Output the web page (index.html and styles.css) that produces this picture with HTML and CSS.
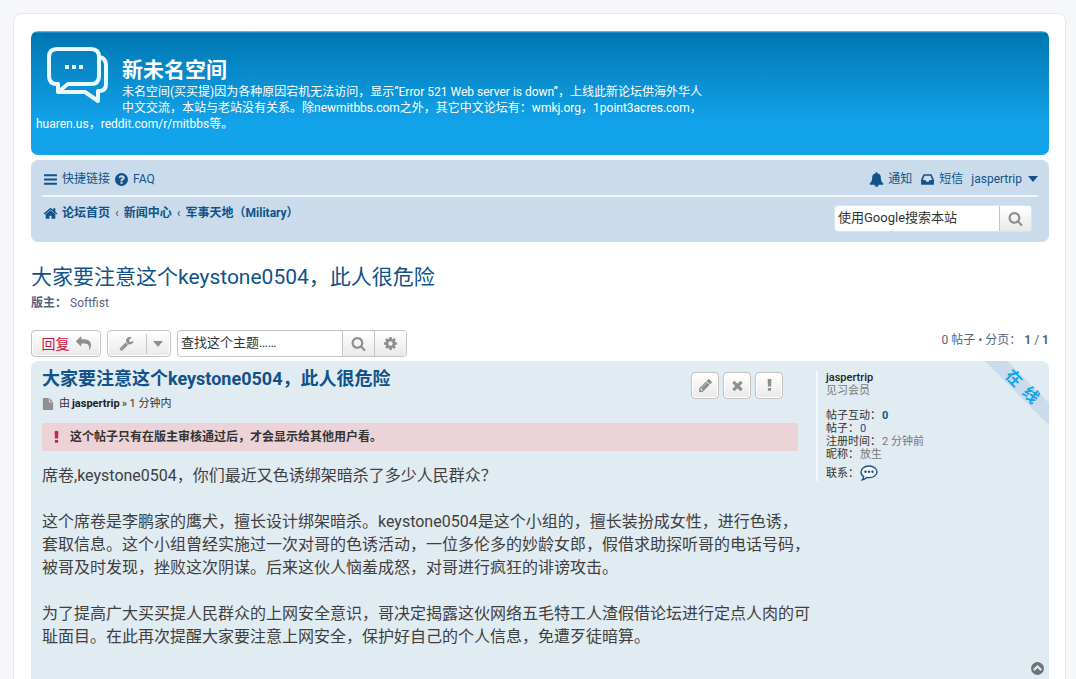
FILE: index.html
```html
<!DOCTYPE html>
<html lang="zh-CN">

<head>
    <meta charset="UTF-8">
    <meta name="viewport" content="width=device-width, initial-scale=1.0">
    <title>大家要注意这个keystone0504，此人很危险 - 新未名空间</title>
    <link rel="stylesheet" href="styles.css">
</head>

<body>
    <div class="wrap">
        <!-- Header -->
        <header class="headerbar">
            <a class="logo" href="#" aria-label="论坛首页">
                <svg width="62" height="58" viewBox="0 0 62 58" fill="none" stroke="#eaf8ff" stroke-width="4" stroke-linejoin="round">
                    <path d="M10 2h34q8 0 8 8v19q0 8-8 8H21L11 45v-8h-1q-8 0-8-8V10q0-8 8-8z" />
                    <path d="M52 10q7 1 7 8v19q0 7-7 7h-1v10L38 45H12" />
                    <path d="M18 20h4M25 20h4M32 20h4" />
                </svg>
            </a>
            <h1>新未名空间</h1>
            <p>未名空间(买买提)因为各种原因宕机无法访问，显示“Error 521 Web server is down”，上线此新论坛供海外华人<br>中文交流，本站与老站没有关系。除newmitbbs.com之外，其它中文论坛有：wmkj.org，1point3acres.com，<br>huaren.us，reddit.com/r/mitbbs等。</p>
        </header>

        <!-- Navigation -->
        <nav class="navbar">
            <div class="nav-main">
                <a href="#"><svg class="icon" viewBox="0 0 1792 1792"><path d="M128 256h1536v256H128zM128 768h1536v256H128zM128 1280h1536v256H128z" /></svg>快捷链接</a>
                <a href="#"><svg class="icon" viewBox="0 0 1792 1792"><path d="M1024 1376v-192q0-14-9-23t-23-9h-192q-14 0-23 9t-9 23v192q0 14 9 23t23 9h192q14 0 23-9t9-23zm256-672q0-88-55.5-163t-138.5-116-170-41q-243 0-371 213-15 24 8 42l132 100q7 6 19 6 16 0 25-12 53-68 86-92 34-24 86-24 48 0 85.5 26t37.5 59q0 38-20 61t-68 45q-63 28-115.5 86.5t-52.5 125.5v36q0 14 9 23t23 9h192q14 0 23-9t9-23q0-19 21.5-49.5t54.5-49.5q32-18 49-28.5t46-35 44.5-48 28-60.5 12.5-81zm384 192q0 209-103 385.5t-279.5 279.5-385.5 103-385.5-103-279.5-279.5-103-385.5 103-385.5 279.5-279.5 385.5-103 385.5 103 279.5 279.5 103 385.5z" /></svg>FAQ</a>
                <div class="nav-user">
                    <a href="#"><svg class="icon" viewBox="0 0 1792 1792"><path d="M912 1696q0-16-16-16-59 0-101.5-42.5t-42.5-101.5q0-16-16-16t-16 16q0 73 51.5 124.5t124.5 51.5q16 0 16-16zm816-288q0 52-38 90t-90 38h-448q0 106-75 181t-181 75-181-75-75-181h-448q-52 0-90-38t-38-90q50-42 91-88t85-119.5 74.5-158.5 50-206 19.5-260q0-152 117-282.5t307-158.5q-8-19-8-39 0-40 28-68t68-28 68 28 28 68q0 20-8 39 190 28 307 158.5t117 282.5q0 139 19.5 260t50 206 74.5 158.5 85 119.5 91 88z" /></svg>通知</a>
                    <a href="#"><svg class="icon" viewBox="0 0 1792 1792"><path d="M1151 960h316q-1-3-2.5-8t-2.5-8l-212-496h-708l-212 496q-1 2-2.5 8t-2.5 8h316l95 192h320zm513 30v482q0 26-19 45t-45 19h-1408q-26 0-45-19t-19-45v-482q0-62 25-123l238-552q10-25 36.5-42t52.5-17h832q26 0 52.5 17t36.5 42l238 552q25 61 25 123z" /></svg>短信</a>
                    <a href="#">jaspertrip<svg class="arrow" viewBox="0 0 10 6"><path d="M0 0h10L5 6z" /></svg></a>
                </div>
            </div>
            <div class="nav-bottom">
                <div class="breadcrumbs">
                    <a href="#"><svg class="icon" viewBox="0 0 1792 1792"><path d="M1472 992v480q0 26-19 45t-45 19h-384v-384h-256v384h-384q-26 0-45-19t-19-45v-480q0-1 .5-3t.5-3l575-474 575 474q1 2 1 6zm223-69l-62 74q-8 9-21 11h-3q-13 0-21-7l-692-577-692 577q-12 8-24 7-13-2-21-11l-62-74q-8-10-7-23.5t11-21.5l719-599q32-26 76-26t76 26l244 204v-195q0-14 9-23t23-9h192q14 0 23 9t9 23v408l219 182q10 8 11 21.5t-7 23.5z" /></svg>论坛首页</a>
                    <span>‹</span>
                    <a href="#">新闻中心</a>
                    <span>‹</span>
                    <a href="#">军事天地（Military）</a>
                </div>
                <form class="search-box">
                    <input type="search" placeholder="使用Google搜索本站" aria-label="使用Google搜索本站">
                    <button type="button" aria-label="搜索"><svg class="icon" viewBox="0 0 1792 1792"><path d="M1216 832q0-185-131.5-316.5t-316.5-131.5-316.5 131.5-131.5 316.5 131.5 316.5 316.5 131.5 316.5-131.5 131.5-316.5zm512 832q0 52-38 90t-90 38q-54 0-90-38l-343-342q-179 124-399 124-143 0-273.5-55.5t-225-150-150-225-55.5-273.5 55.5-273.5 150-225 225-150 273.5-55.5 273.5 55.5 225 150 150 225 55.5 273.5q0 220-124 399l343 343q37 37 37 90z" /></svg></button>
                </form>
            </div>
        </nav>

        <!-- Topic -->
        <main class="topic">
            <h2><a href="#">大家要注意这个keystone0504，此人很危险</a></h2>
            <p class="moderators"><strong>版主：</strong> <a href="#">Softfist</a></p>

            <div class="action-bar">
                <button type="button" class="button reply">回复<svg class="icon" viewBox="0 0 1792 1792"><path d="M1792 1120q0 166-127 451-3 7-10.5 24t-13.5 30-13 22q-12 17-28 17-15 0-23.5-10t-8.5-25q0-9 2.5-26.5t2.5-23.5q5-68 5-123 0-101-17.5-181t-48.5-138.5-80-101-105.5-69.5-133-42.5-154-21.5-175.5-6h-224v256q0 26-19 45t-45 19-45-19l-512-512q-19-19-19-45t19-45l512-512q19-19 45-19t45 19 19 45v256h224q713 0 875 403 53 134 53 333z" /></svg></button>
                <button type="button" class="button tools" aria-label="主题工具">
                    <svg class="icon" viewBox="0 0 1792 1792"><path d="M448 1472q0-26-19-45t-45-19-45 19-19 45 19 45 45 19 45-19 19-45zm644-420l-682 682q-37 37-90 37-52 0-91-37l-106-108q-38-36-38-90 0-53 38-91l681-681q39 98 114.5 173.5t173.5 114.5zm634-435q0 39-23 106-47 134-164.5 217.5t-258.5 83.5q-185 0-316.5-131.5t-131.5-316.5 131.5-316.5 316.5-131.5q58 0 121.5 16.5t107.5 46.5q16 11 16 28t-16 28l-293 169v224l193 107q5-3 79-48.5t135.5-81 70.5-35.5q15 0 23.5 10t8.5 25z" /></svg>
                    <span class="caret"><svg class="arrow" viewBox="0 0 10 6"><path d="M0 0h10L5 6z" /></svg></span>
                </button>
                <form class="search-box">
                    <input type="search" placeholder="查找这个主题……" aria-label="查找这个主题">
                    <button type="button" aria-label="搜索"><svg class="icon" viewBox="0 0 1792 1792"><path d="M1216 832q0-185-131.5-316.5t-316.5-131.5-316.5 131.5-131.5 316.5 131.5 316.5 316.5 131.5 316.5-131.5 131.5-316.5zm512 832q0 52-38 90t-90 38q-54 0-90-38l-343-342q-179 124-399 124-143 0-273.5-55.5t-225-150-150-225-55.5-273.5 55.5-273.5 150-225 225-150 273.5-55.5 273.5 55.5 225 150 150 225 55.5 273.5q0 220-124 399l343 343q37 37 37 90z" /></svg></button>
                    <button type="button" aria-label="高级搜索"><svg class="icon" viewBox="0 0 1792 1792"><path d="M1152 896q0-106-75-181t-181-75-181 75-75 181 75 181 181 75 181-75 75-181zm512-109v222q0 12-8 23t-20 13l-185 28q-19 54-39 91 35 50 107 138 10 12 10 25t-9 23q-27 37-99 108t-94 71q-12 0-26-9l-138-108q-44 23-91 38-16 136-29 186-7 28-36 28h-222q-14 0-24.5-8.5t-11.5-21.5l-28-184q-49-16-90-37l-141 107q-10 9-25 9-14 0-25-11-126-114-165-168-7-10-7-23 0-12 8-23 15-21 51-66.5t54-70.5q-27-50-41-99l-183-27q-13-2-21-12.5t-8-23.5v-222q0-12 8-23t19-13l186-28q14-46 39-92-40-57-107-138-10-12-10-24 0-10 9-23 26-36 98.5-107.5t94.5-71.5q13 0 26 10l138 107q44-23 91-38 16-136 29-186 7-28 36-28h222q14 0 24.5 8.5t11.5 21.5l28 184q49 16 90 37l142-107q9-9 24-9 13 0 25 10 129 119 165 170 7 8 7 22 0 12-8 23-15 21-51 66.5t-54 70.5q26 50 41 98l183 28q13 2 21 12.5t8 23.5z" /></svg></button>
                </form>
                <div class="pagination">0 帖子 • 分页： <strong>1</strong> / <strong>1</strong></div>
            </div>

            <!-- Post -->
            <article class="post">
                <div class="post-body">
                    <div class="post-head">
                        <div>
                            <h3><a href="#">大家要注意这个keystone0504，此人很危险</a></h3>
                            <p class="author"><svg class="icon" viewBox="0 0 1792 1792"><path d="M1152 512v-472q22 14 36 28l408 408q14 14 28 36h-472zm-128 32q0 40 28 68t68 28h544v1056q0 40-28 68t-68 28h-1344q-40 0-68-28t-28-68v-1600q0-40 28-68t68-28h800v544z" /></svg>由 <a href="#">jaspertrip</a> » 1 分钟内</p>
                        </div>
                        <div class="post-buttons">
                            <button type="button" class="button" aria-label="编辑"><svg class="icon" viewBox="0 0 1792 1792"><path d="M491 1536l91-91-235-235-91 91v107h128v128h107zm523-928q0-22-22-22-10 0-17 7l-542 542q-7 7-7 17 0 22 22 22 10 0 17-7l542-542q7-7 7-17zm-54-192l416 416-832 832h-416v-416zm683 96q0 53-37 90l-166 166-416-416 166-165q36-38 90-38 53 0 91 38l235 234q37 39 37 91z" /></svg></button>
                            <button type="button" class="button" aria-label="删除"><svg class="icon" viewBox="0 0 1792 1792"><path d="M1490 1322q0 40-28 68l-136 136q-28 28-68 28t-68-28l-294-294-294 294q-28 28-68 28t-68-28l-136-136q-28-28-28-68t28-68l294-294-294-294q-28-28-28-68t28-68l136-136q28-28 68-28t68 28l294 294 294-294q28-28 68-28t68 28l136 136q28 28 28 68t-28 68l-294 294 294 294q28 28 28 68z" /></svg></button>
                            <button type="button" class="button" aria-label="举报"><svg class="icon" viewBox="0 0 1792 1792"><path d="M1088 1248v224q0 26-19 45t-45 19h-256q-26 0-45-19t-19-45v-224q0-26 19-45t45-19h256q26 0 45 19t19 45zm30-1056l-28 768q-1 26-20.5 45t-45.5 19h-256q-26 0-45.5-19t-20.5-45l-28-768q-1-26 17.5-45t44.5-19h320q26 0 44.5 19t17.5 45z" /></svg></button>
                        </div>
                    </div>
                    <p class="notice"><svg class="icon" viewBox="0 0 1792 1792"><path d="M1088 1248v224q0 26-19 45t-45 19h-256q-26 0-45-19t-19-45v-224q0-26 19-45t45-19h256q26 0 45 19t19 45zm30-1056l-28 768q-1 26-20.5 45t-45.5 19h-256q-26 0-45.5-19t-20.5-45l-28-768q-1-26 17.5-45t44.5-19h320q26 0 44.5 19t17.5 45z" /></svg>这个帖子只有在版主审核通过后，才会显示给其他用户看。</p>
                    <div class="content">
                        <p>席卷,keystone0504，你们最近又色诱绑架暗杀了多少人民群众？</p>
                        <p>这个席卷是李鹏家的鹰犬，擅长设计绑架暗杀。keystone0504是这个小组的，擅长装扮成女性，进行色诱，<br>套取信息。这个小组曾经实施过一次对哥的色诱活动，一位多伦多的妙龄女郎，假借求助探听哥的电话号码，<br>被哥及时发现，挫败这次阴谋。后来这伙人恼羞成怒，对哥进行疯狂的诽谤攻击。</p>
                        <p>为了提高广大买买提人民群众的上网安全意识，哥决定揭露这伙网络五毛特工人渣假借论坛进行定点人肉的可<br>耻面目。在此再次提醒大家要注意上网安全，保护好自己的个人信息，免遭歹徒暗算。</p>
                    </div>
                </div>
                <aside class="post-side">
                    <div class="profile">
                        <a class="username" href="#">jaspertrip</a>
                        <p class="rank">见习会员</p>
                        <dl>
                            <div><dt>帖子互动：</dt><dd><a class="count" href="#">0</a></dd></div>
                            <div><dt>帖子：</dt><dd><a href="#">0</a></dd></div>
                            <div><dt>注册时间：</dt><dd>2 分钟前</dd></div>
                            <div><dt>昵称：</dt><dd>放生</dd></div>
                            <div class="contact"><dt>联系：</dt><dd><a href="#" aria-label="联系 jaspertrip"><svg width="18" height="16" viewBox="0 0 18 16"><path d="M9 1c4.6 0 8 2.500 8 5.800s-3.400 5.800-8 5.800c-.8 0-1.500-.1-2.200-.2C5.400 13.700 4 14.500 2.200 14.900c.9-1 1.400-2 1.600-3.200C2 10.600 1 8.900 1 6.800 1 3.500 4.400 1 9 1z" fill="#f4f9fc" stroke="#105289" stroke-width="1.300" /><g fill="#105289"><circle cx="5.500" cy="6.800" r="1.200" /><circle cx="9" cy="6.800" r="1.200" /><circle cx="12.500" cy="6.800" r="1.200" /></g></svg></a></dd></div>
                        </dl>
                    </div>
                    <a class="back-top" href="#" aria-label="页首"><svg class="icon" viewBox="0 0 1792 1792"><path d="M1293 1139l102-102q19-19 19-45t-19-45l-454-454q-19-19-45-19t-45 19l-454 454q-19 19-19 45t19 45l102 102q19 19 45 19t45-19l307-307 307 307q19 19 45 19t45-19zm371-243q0 209-103 385.5t-279.5 279.5-385.5 103-385.5-103-279.5-279.5-103-385.5 103-385.5 279.5-279.5 385.5-103 385.5 103 279.5 279.5 103 385.5z" /></svg></a>
                </aside>
                <div class="online"><div class="ribbon"><span>在</span><span>线</span></div></div>
            </article>
        </main>
    </div>
</body>

</html>
```
FILE: styles.css
```css
* {
    box-sizing: border-box;
    margin: 0;
    padding: 0;
}

body {
    display: flex;
    flex-direction: column;
    min-height: 100vh;
    padding: 13px 10px 0 13px;
    background-color: #f5f7fa;
    color: #536482;
    font-family: Roboto, "Noto Sans CJK SC", sans-serif;
    font-size: 12px;
    line-height: 16px;
}

a {
    color: #105289;
    text-decoration: none;
}

button,
input {
    font-family: inherit;
}

.icon {
    width: 15px;
    height: 15px;
    fill: currentColor;
    flex: none;
}

.arrow {
    width: 10px;
    height: 6px;
    fill: currentColor;
    flex: none;
}

.wrap {
    flex: 1;
    display: flex;
    flex-direction: column;
    padding: 17px 16px 0 17px;
    background-color: #fff;
    border: 1px solid #e6e9ed;
    border-bottom: 0;
    border-radius: 8px 8px 0 0;
}

/* Header */
.headerbar {
    padding: 26px 5px 23px;
    margin-bottom: 5px;
    border-radius: 7px;
    background: #12a3eb linear-gradient(to bottom, #6aceff 0, #0076b1 2px, #12a3eb 92px);
    color: #fff;
}

.logo {
    float: left;
    margin: -10px 13px 0 11px;
}

.logo svg {
    display: block;
}

.headerbar h1 {
    font-size: 21px;
    line-height: 27px;
}

.headerbar p {
    white-space: nowrap;
}

/* Navigation */
.navbar {
    padding: 3px 11px 10px;
    border-radius: 7px;
    background-color: #cadceb;
}

.nav-main,
.nav-user,
.breadcrumbs,
.nav-main a,
.breadcrumbs a {
    display: flex;
    align-items: center;
}

.nav-main {
    gap: 4px;
    height: 34px;
    padding-left: 1px;
    border-bottom: 2px solid #f0f6fa;
}

.nav-main a,
.breadcrumbs a {
    gap: 4px;
}

.nav-user {
    gap: 8px;
    margin-left: auto;
}

.nav-main .arrow {
    margin-left: 2px;
}

.nav-bottom {
    display: flex;
    justify-content: space-between;
    align-items: flex-start;
    padding: 8px 6px 0 1px;
}

.breadcrumbs {
    gap: 5px;
    font-weight: bold;
}

/* Search boxes and buttons */
.search-box {
    display: flex;
    height: 27px;
    border: 1px solid #c7c3bf;
    border-radius: 4px;
    background-color: #fff;
    overflow: hidden;
}

.nav-bottom .search-box {
    border-color: #dbe4ea;
}

.search-box input {
    width: 164px;
    padding: 0 3px 2px;
    border: 0;
    outline: 0;
    background: none;
    color: #333;
    font-size: 13px;
}

.search-box input::placeholder {
    color: #333;
    opacity: 1;
}

.search-box button {
    display: flex;
    align-items: center;
    justify-content: center;
    width: 32px;
    border: 0;
    border-left: 1px solid #c7c3bf;
    background: linear-gradient(#fff, #e9e9e9);
    color: #8f8f8f;
}

.button {
    display: flex;
    align-items: center;
    justify-content: center;
    height: 27px;
    border: 1px solid #c7c3bf;
    border-radius: 4px;
    background: linear-gradient(#fff, #e9e9e9);
    box-shadow: 0 0 0 1px #fff inset;
    color: #8f8f8f;
}

/* Topic */
.topic {
    flex: 1;
    display: flex;
    flex-direction: column;
    padding-top: 21px;
}

.topic h2 {
    font-size: 21px;
    font-weight: normal;
    line-height: 28px;
}

.moderators {
    margin: 4px 0 19px;
}

.moderators a {
    color: #536482;
}

.action-bar {
    display: flex;
    gap: 6px;
    margin-bottom: 4px;
}

.reply {
    gap: 6px;
    width: 70px;
    padding-bottom: 1px;
    color: #d31141;
    font-size: 14px;
}

.reply .icon {
    color: #8f8f8f;
}

.tools {
    width: 64px;
    gap: 12px;
    padding-left: 4px;
}

.caret {
    display: flex;
    align-items: center;
    height: 20px;
    padding-left: 6px;
    border-left: 1px solid #c7c3bf;
}

.pagination {
    margin: 2px 0 0 auto;
}

/* Post */
.post {
    position: relative;
    flex: 1;
    display: flex;
    border-radius: 7px 7px 0 0;
    background-color: #e1ebf2;
}

.post-body {
    flex: 1;
    padding: 5px 0 29px 11px;
}

.post-head {
    display: flex;
    justify-content: space-between;
    padding-right: 33px;
}

.post h3 {
    font-size: 18px;
    line-height: 26px;
}

.author {
    display: flex;
    align-items: center;
    gap: 2px;
    margin: 4px 0 11px;
    color: #333;
    font-size: 11px;
}

.author .icon {
    width: 12px;
    height: 12px;
    margin-right: 3px;
    color: #8f8f8f;
}

.author a {
    color: #222;
    font-weight: bold;
}

.post-buttons {
    display: flex;
    gap: 4px;
    padding-top: 6px;
}

.post-buttons .button {
    width: 28px;
}

.notice {
    display: flex;
    align-items: center;
    gap: 6px;
    height: 28px;
    margin: 0 18px 13px 0;
    padding-left: 7px;
    background-color: #ebd3d7;
    color: #333;
    font-weight: bold;
}

.notice .icon {
    color: #bc2a4d;
}

.content {
    color: #3f3f3f;
    font-size: 16px;
    line-height: 23px;
    white-space: nowrap;
}

.content p + p {
    margin-top: 23px;
}

.post-side {
    display: flex;
    flex-direction: column;
    width: 233px;
    padding: 10px 4px 3px 0;
    font-size: 11px;
    line-height: 13px;
}

.profile {
    padding-left: 8px;
    border-left: 2px solid #f5f9fb;
    color: #333;
}

.username {
    color: #222;
    font-weight: 500;
}

.rank {
    margin-bottom: 12px;
    color: #7a7a7a;
}

.profile dl div {
    display: flex;
    gap: 1px;
}

.profile dd {
    color: #777;
}

.profile .count {
    font-weight: bold;
}

.profile .contact {
    align-items: center;
    padding-top: 4px;
}

.contact svg {
    display: block;
}

.back-top {
    display: flex;
    align-self: flex-end;
    margin-top: auto;
    color: #6f7376;
}

/* Online ribbon over the corner of the post */
.online {
    position: absolute;
    top: 0;
    right: 0;
    width: 64px;
    height: 64px;
    border-radius: 0 7px 0 0;
    overflow: hidden;
}

.ribbon {
    position: absolute;
    top: 18px;
    left: -18px;
    display: flex;
    justify-content: center;
    gap: 8px;
    width: 110px;
    background-color: #cadceb;
    color: #12a3eb;
    font-size: 16px;
    font-weight: bold;
    line-height: 16px;
    transform: rotate(45deg);
}
```
